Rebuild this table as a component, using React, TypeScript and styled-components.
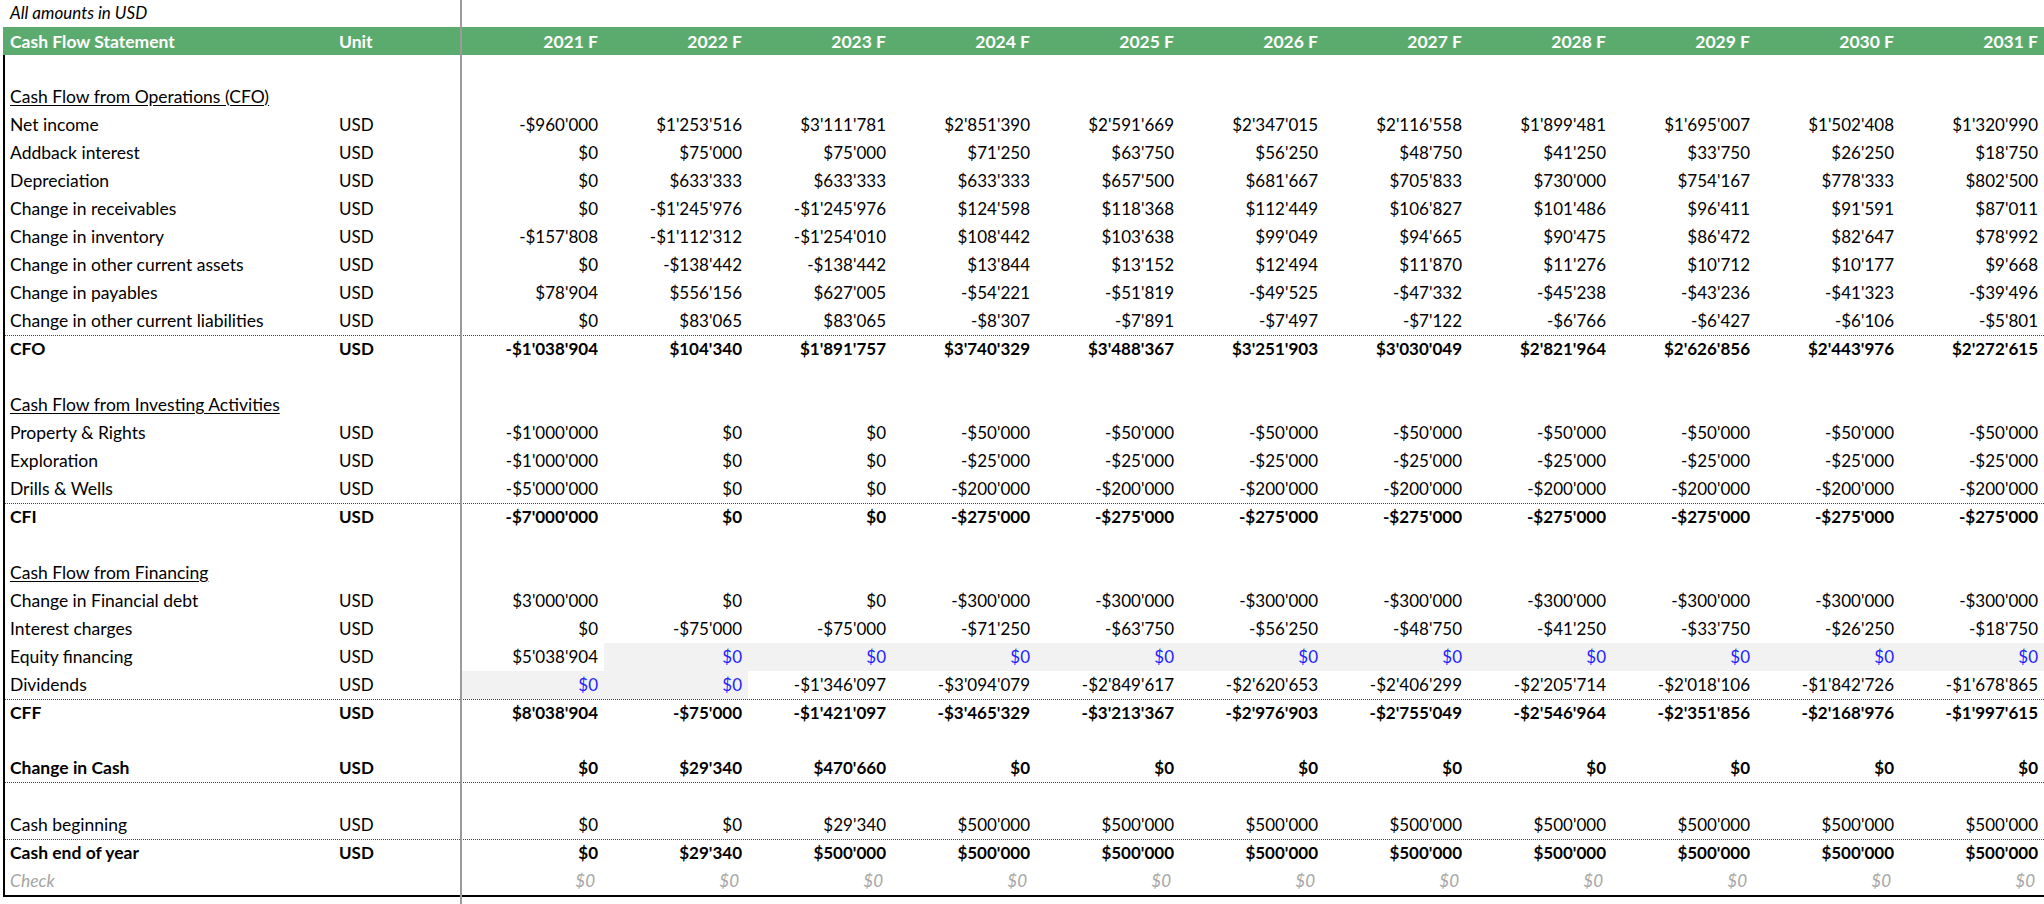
import styled, { createGlobalStyle } from 'styled-components';

const GlobalStyle = createGlobalStyle`
  body {
    margin: 0;
    background: #fff;
    font-family: Lato, "Liberation Sans", sans-serif;
    color: #000;
  }
`;

const YEARS = ['2021 F', '2022 F', '2023 F', '2024 F', '2025 F', '2026 F', '2027 F', '2028 F', '2029 F', '2030 F', '2031 F'];

type Kind = 'blank' | 'title' | 'item' | 'total' | 'check';

interface Line {
  kind: Kind;
  label?: string;
  values?: string[];
  inputs?: number[];
  rule?: 'top' | 'bottom';
}

const rep = (v: string, n: number) => Array(n).fill(v);

const LINES: Line[] = [
  { kind: 'blank' },
  { kind: 'title', label: 'Cash Flow from Operations (CFO)' },
  { kind: 'item', label: 'Net income', values: ["-$960'000", "$1'253'516", "$3'111'781", "$2'851'390", "$2'591'669", "$2'347'015", "$2'116'558", "$1'899'481", "$1'695'007", "$1'502'408", "$1'320'990"] },
  { kind: 'item', label: 'Addback interest', values: ['$0', "$75'000", "$75'000", "$71'250", "$63'750", "$56'250", "$48'750", "$41'250", "$33'750", "$26'250", "$18'750"] },
  { kind: 'item', label: 'Depreciation', values: ['$0', "$633'333", "$633'333", "$633'333", "$657'500", "$681'667", "$705'833", "$730'000", "$754'167", "$778'333", "$802'500"] },
  { kind: 'item', label: 'Change in receivables', values: ['$0', "-$1'245'976", "-$1'245'976", "$124'598", "$118'368", "$112'449", "$106'827", "$101'486", "$96'411", "$91'591", "$87'011"] },
  { kind: 'item', label: 'Change in inventory', values: ["-$157'808", "-$1'112'312", "-$1'254'010", "$108'442", "$103'638", "$99'049", "$94'665", "$90'475", "$86'472", "$82'647", "$78'992"] },
  { kind: 'item', label: 'Change in other current assets', values: ['$0', "-$138'442", "-$138'442", "$13'844", "$13'152", "$12'494", "$11'870", "$11'276", "$10'712", "$10'177", "$9'668"] },
  { kind: 'item', label: 'Change in payables', values: ["$78'904", "$556'156", "$627'005", "-$54'221", "-$51'819", "-$49'525", "-$47'332", "-$45'238", "-$43'236", "-$41'323", "-$39'496"] },
  { kind: 'item', label: 'Change in other current liabilities', values: ['$0', "$83'065", "$83'065", "-$8'307", "-$7'891", "-$7'497", "-$7'122", "-$6'766", "-$6'427", "-$6'106", "-$5'801"] },
  { kind: 'total', label: 'CFO', rule: 'top', values: ["-$1'038'904", "$104'340", "$1'891'757", "$3'740'329", "$3'488'367", "$3'251'903", "$3'030'049", "$2'821'964", "$2'626'856", "$2'443'976", "$2'272'615"] },
  { kind: 'blank' },
  { kind: 'title', label: 'Cash Flow from Investing Activities' },
  { kind: 'item', label: 'Property & Rights', values: ["-$1'000'000", '$0', '$0', ...rep("-$50'000", 8)] },
  { kind: 'item', label: 'Exploration', values: ["-$1'000'000", '$0', '$0', ...rep("-$25'000", 8)] },
  { kind: 'item', label: 'Drills & Wells', values: ["-$5'000'000", '$0', '$0', ...rep("-$200'000", 8)] },
  { kind: 'total', label: 'CFI', rule: 'top', values: ["-$7'000'000", '$0', '$0', ...rep("-$275'000", 8)] },
  { kind: 'blank' },
  { kind: 'title', label: 'Cash Flow from Financing' },
  { kind: 'item', label: 'Change in Financial debt', values: ["$3'000'000", '$0', '$0', ...rep("-$300'000", 8)] },
  { kind: 'item', label: 'Interest charges', values: ['$0', "-$75'000", "-$75'000", "-$71'250", "-$63'750", "-$56'250", "-$48'750", "-$41'250", "-$33'750", "-$26'250", "-$18'750"] },
  { kind: 'item', label: 'Equity financing', values: ["$5'038'904", ...rep('$0', 10)], inputs: [1, 2, 3, 4, 5, 6, 7, 8, 9, 10] },
  { kind: 'item', label: 'Dividends', values: ['$0', '$0', "-$1'346'097", "-$3'094'079", "-$2'849'617", "-$2'620'653", "-$2'406'299", "-$2'205'714", "-$2'018'106", "-$1'842'726", "-$1'678'865"], inputs: [0, 1] },
  { kind: 'total', label: 'CFF', rule: 'top', values: ["$8'038'904", "-$75'000", "-$1'421'097", "-$3'465'329", "-$3'213'367", "-$2'976'903", "-$2'755'049", "-$2'546'964", "-$2'351'856", "-$2'168'976", "-$1'997'615"] },
  { kind: 'blank' },
  { kind: 'total', label: 'Change in Cash', rule: 'bottom', values: ['$0', "$29'340", "$470'660", ...rep('$0', 8)] },
  { kind: 'blank' },
  { kind: 'item', label: 'Cash beginning', values: ['$0', '$0', "$29'340", ...rep("$500'000", 8)] },
  { kind: 'total', label: 'Cash end of year', rule: 'top', values: ['$0', "$29'340", ...rep("$500'000", 9)] },
  { kind: 'check', label: 'Check', values: rep('$0', 11) },
];

const COLS = '329px 126px repeat(11, 144px)';

const Sheet = styled.div`
  position: relative;
  width: 2044px;
  height: 904px;
  overflow: hidden;
  font-size: 17px;
`;

const Note = styled.div`
  height: 27px;
  box-sizing: border-box;
  display: flex;
  align-items: flex-end;
  padding: 0 0 4px 10px;
  font-style: italic;
`;

const Table = styled.div`
  margin-left: 3px;
  width: 2041px;
`;

const HeaderRow = styled.div`
  display: grid;
  grid-template-columns: ${COLS};
  height: 28px;
  padding-left: 2px;
  background: #5bab6e;
  color: #fff;
  font-weight: 700;
`;

const HeadCell = styled.div<{ $right?: boolean }>`
  display: flex;
  align-items: center;
  justify-content: ${(p) => (p.$right ? 'flex-end' : 'flex-start')};
  padding: ${(p) => (p.$right ? '0 6px 0 0' : '0 0 0 5px')};
  font-size: 17.5px;
`;

const Body = styled.div`
  border-left: 2px solid #000;
  border-bottom: 2px solid #000;
`;

const Row = styled.div<{ $bold?: boolean; $rule?: 'top' | 'bottom' }>`
  display: grid;
  grid-template-columns: ${COLS};
  height: 28px;
  box-sizing: border-box;
  font-weight: ${(p) => (p.$bold ? 700 : 400)};
  border-top: ${(p) => (p.$rule === 'top' ? '1px dotted #444' : 'none')};
  border-bottom: ${(p) => (p.$rule === 'bottom' ? '1px dotted #444' : 'none')};
`;

const Label = styled.div<{ $title?: boolean; $muted?: boolean }>`
  display: flex;
  align-items: flex-end;
  padding: 0 0 4px 5px;
  font-size: 17.5px;
  white-space: nowrap;
  text-decoration: ${(p) => (p.$title ? 'underline' : 'none')};
  text-underline-offset: 2px;
  font-style: ${(p) => (p.$muted ? 'italic' : 'normal')};
  color: ${(p) => (p.$muted ? '#a5a5a5' : '#000')};
`;

const Unit = styled.div`
  display: flex;
  align-items: flex-end;
  padding: 0 0 4px 5px;
`;

const Value = styled.div<{ $tone: 'black' | 'blue' | 'gray'; $fill?: boolean }>`
  display: flex;
  align-items: flex-end;
  justify-content: flex-end;
  padding: 0 ${(p) => (p.$tone === 'gray' ? 9 : 6)}px 4px 0;
  white-space: nowrap;
  background: ${(p) => (p.$fill ? '#f2f2f2' : 'transparent')};
  color: ${(p) => (p.$tone === 'blue' ? '#1f1fff' : p.$tone === 'gray' ? '#a5a5a5' : '#000')};
  font-style: ${(p) => (p.$tone === 'gray' ? 'italic' : 'normal')};
`;

const PaneSplit = styled.div`
  position: absolute;
  top: 0;
  left: 460px;
  width: 2px;
  height: 904px;
  background: #9b9b9b;
`;

const App = () => {
  return (
    <Sheet>
      <GlobalStyle />
      <Note>All amounts in USD</Note>
      <Table>
        <HeaderRow>
          <HeadCell>Cash Flow Statement</HeadCell>
          <HeadCell>Unit</HeadCell>
          {YEARS.map((y) => (
            <HeadCell key={y} $right>{y}</HeadCell>
          ))}
        </HeaderRow>
        <Body>
          {LINES.map((line, i) => (
            <Row key={i} $bold={line.kind === 'total'} $rule={line.rule}>
              <Label $title={line.kind === 'title'} $muted={line.kind === 'check'}>{line.label}</Label>
              <Unit>{line.kind === 'item' || line.kind === 'total' ? 'USD' : ''}</Unit>
              {(line.values ?? rep('', 11)).map((v, j) => {
                const input = line.inputs?.includes(j);
                const tone = line.kind === 'check' ? 'gray' : input ? 'blue' : 'black';
                return (
                  <Value key={j} $tone={tone} $fill={input}>{v}</Value>
                );
              })}
            </Row>
          ))}
        </Body>
      </Table>
      <PaneSplit />
    </Sheet>
  );
};

export default App;
